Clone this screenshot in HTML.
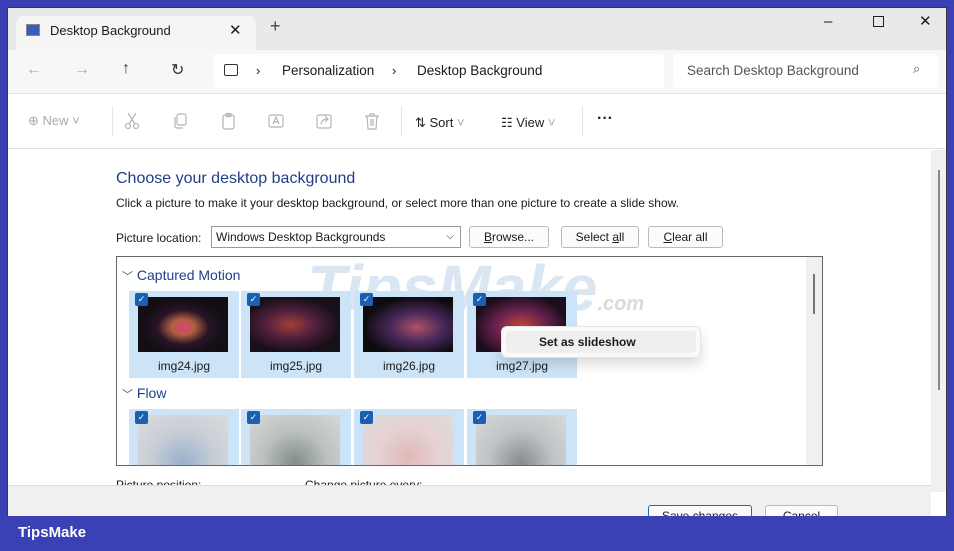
<!DOCTYPE html>
<html><head><meta charset="utf-8">
<style>
*{box-sizing:border-box;margin:0;padding:0}
body{width:954px;height:551px;background:#3a41b5;font-family:"Liberation Sans",sans-serif;position:relative;overflow:hidden;color:#1a1a1a}
.win{position:absolute;left:7px;top:7px;width:940px;height:515px;background:#fff;border:1px solid #3a3a3a;overflow:hidden}
.tabbar{position:absolute;left:0;top:0;width:100%;height:42px;background:#e9e9e9}
.tab{position:absolute;left:8px;top:8px;width:240px;height:34px;background:#f5f5f5;border-radius:8px 8px 0 0;font-size:13px}
.nav{position:absolute;left:0;top:42px;width:100%;height:44px;background:#f7f7f7;border-bottom:1px solid #e5e5e5}
.addr{position:absolute;left:206px;top:4px;width:450px;height:34px;background:#fff;border-radius:4px}
.search{position:absolute;left:665px;top:4px;width:265px;height:34px;background:#fff;border-radius:4px;font-size:13.5px;color:#555}
.tool{position:absolute;left:0;top:86px;width:100%;height:55px;background:#fff;border-bottom:1px solid #e2e2e2;font-size:13px;color:#222}
.t{position:absolute}
.gray{color:#aaa}
.ic{position:absolute;top:18px;width:18px;height:18px;fill:none;stroke:#b5b5b5;stroke-width:1.2}
.btn{position:absolute;height:22px;border:1px solid #bbb;border-radius:3px;background:#fbfbfb;font-size:12px;text-align:center;line-height:20px}
.item{position:absolute;width:110px;height:87px;background:#cce4f7}
.item .img{position:absolute;left:9px;top:6px;width:90px;height:55px}
.item .lbl{position:absolute;left:0;top:68px;width:100%;text-align:center;font-size:12px}
.chk{position:absolute;left:6px;top:2px;width:13px;height:13px;background:#1a5fb4;border-radius:2px;color:#fff;font-size:9px;line-height:13px;text-align:center;z-index:2}
</style></head><body>
<div class="win">
 <div class="tabbar">
  <div class="tab">
   <div class="t" style="left:10px;top:8px;width:14px;height:12px;background:#3b5bb8;border:1px solid #888"></div>
   <div class="t" style="left:34px;top:7px">Desktop Background</div>
   <div class="t" style="left:213px;top:5px;font-size:15px">✕</div>
  </div>
  <div class="t" style="left:262px;top:8px;font-size:18px;color:#444">+</div>
  <div class="t" style="left:816px;top:5px;font-size:15px">–</div>
  <div class="t" style="left:865px;top:8px;width:11px;height:11px;border:1.3px solid #222"></div>
  <div class="t" style="left:911px;top:4px;font-size:15px">✕</div>
 </div>
 <div class="nav">
  <div class="t gray" style="left:18px;top:11px;font-size:16px">←</div>
  <div class="t gray" style="left:66px;top:11px;font-size:16px">→</div>
  <div class="t" style="left:114px;top:10px;font-size:16px;color:#333">↑</div>
  <div class="t" style="left:163px;top:10px;font-size:16px;color:#333">↻</div>
  <div class="addr">
   <div class="t" style="left:10px;top:10px;width:14px;height:12px;border:1.3px solid #333;border-radius:2px"></div>
   <div class="t" style="left:42px;top:9px;font-size:13px">›</div>
   <div class="t" style="left:68px;top:9px;font-size:13.5px">Personalization</div>
   <div class="t" style="left:178px;top:9px;font-size:13px">›</div>
   <div class="t" style="left:203px;top:9px;font-size:13.5px">Desktop Background</div>
  </div>
  <div class="search"><div class="t" style="left:14px;top:9px">Search Desktop Background</div><div class="t" style="left:240px;top:7px;font-size:13px">⌕</div></div>
 </div>
 <div class="tool">
  <div class="t gray" style="left:20px;top:19px;font-size:13px">⊕ New ˅</div>
  <div class="t" style="left:104px;top:12px;width:1px;height:30px;background:#e5e5e5"></div>
  <svg class="ic" style="left:115px" viewBox="0 0 18 18"><circle cx="5" cy="14" r="2.5"/><circle cx="13" cy="14" r="2.5"/><path d="M6 12L13 1M12 12L5 1"/></svg>
  <svg class="ic" style="left:163px" viewBox="0 0 18 18"><rect x="6" y="2" width="9" height="11" rx="2"/><path d="M4 5v9a2 2 0 0 0 2 2h6"/></svg>
  <svg class="ic" style="left:211px" viewBox="0 0 18 18"><rect x="4" y="3" width="11" height="14" rx="2"/><rect x="7" y="1.5" width="5" height="3" rx="1"/></svg>
  <svg class="ic" style="left:259px" viewBox="0 0 18 18"><rect x="2" y="3" width="14" height="12" rx="2"/><path d="M6 12l3-7 3 7M7 10h4"/></svg>
  <svg class="ic" style="left:307px" viewBox="0 0 18 18"><rect x="2" y="3" width="14" height="13" rx="2"/><path d="M6 12c1-4 3-5 7-5M10 4l3 3-3 3"/></svg>
  <svg class="ic" style="left:355px" viewBox="0 0 18 18"><path d="M2 4h14M7 4V2h4v2M4 4l1 13h8l1-13M8 7v7M10 7v7"/></svg>
  <div class="t" style="left:393px;top:12px;width:1px;height:30px;background:#e5e5e5"></div>
  <div class="t" style="left:407px;top:21px">⇅ Sort <span class="gray">˅</span></div>
  <div class="t" style="left:493px;top:21px">☷ View <span class="gray">˅</span></div>
  <div class="t" style="left:574px;top:12px;width:1px;height:30px;background:#e5e5e5"></div>
  <div class="t" style="left:589px;top:16px;font-size:16px;font-weight:bold">···</div>
 </div>
 <div class="t" style="left:923px;top:142px;width:16px;height:342px;background:#f0f0f0"><div style="position:absolute;left:7px;top:20px;width:2px;height:220px;background:#888"></div></div>
 <div class="t" style="left:108px;top:162px;font-size:16px;color:#1f3f8a">Choose your desktop background</div>
 <div class="t" style="left:108px;top:188px;font-size:12px">Click a picture to make it your desktop background, or select more than one picture to create a slide show.</div>
 <div class="t" style="left:108px;top:223px;font-size:12px">Picture location:</div>
 <div class="t" style="left:203px;top:218px;width:250px;height:22px;border:1px solid #999;font-size:12px;line-height:20px;padding-left:4px">Windows Desktop Backgrounds<span style="position:absolute;right:6px;font-size:10px">⌵</span></div>
 <div class="btn" style="left:461px;top:218px;width:80px"><u>B</u>rowse...</div>
 <div class="btn" style="left:553px;top:218px;width:78px">Select <u>a</u>ll</div>
 <div class="btn" style="left:640px;top:218px;width:75px"><u>C</u>lear all</div>
 <div class="t" style="left:108px;top:248px;width:707px;height:210px;border:1px solid #666;overflow:hidden;background:#fff">
  <div class="t" style="right:0;top:0;width:16px;height:100%;background:#f0f0f0"><div style="position:absolute;left:7px;top:17px;width:2px;height:40px;background:#777"></div></div>
  <div class="t" style="left:5px;top:10px;font-size:14px;color:#1f3f8a"><span style="color:#555;font-size:11px">﹀</span> Captured Motion</div>
  <div class="t" style="left:190px;top:-6px;font-size:64px;font-weight:bold;font-style:italic;color:rgba(90,140,200,0.22)">TipsMake<span style="font-size:20px;color:rgba(150,150,150,0.35)">.com</span></div>
  <div class="item" style="left:12px;top:34px"><div class="chk">✓</div><div class="img" style="background:radial-gradient(ellipse at 50% 55%,#e0407a,#b06040 18%,#2a1428 40%,#120e14 65%)"></div><div class="lbl">img24.jpg</div></div>
  <div class="item" style="left:124px;top:34px"><div class="chk">✓</div><div class="img" style="background:radial-gradient(ellipse at 45% 50%,#a04038,#52203e 35%,#181018 70%)"></div><div class="lbl">img25.jpg</div></div>
  <div class="item" style="left:237px;top:34px"><div class="chk">✓</div><div class="img" style="background:radial-gradient(ellipse at 60% 55%,#b05068,#48285a 35%,#0e0b10 70%)"></div><div class="lbl">img26.jpg</div></div>
  <div class="item" style="left:350px;top:34px"><div class="chk">✓</div><div class="img" style="background:radial-gradient(ellipse at 50% 55%,#c84838,#6a2250 40%,#1a0e1a 75%)"></div><div class="lbl">img27.jpg</div></div>
  <div class="t" style="left:5px;top:128px;font-size:14px;color:#1f3f8a"><span style="color:#555;font-size:11px">﹀</span> Flow</div>
  <div class="item" style="left:12px;top:152px"><div class="chk">✓</div><div class="img" style="height:60px;background:radial-gradient(circle at 50% 80%,#9ab0cc,#c8ced6 50%,#dcdcdc)"></div></div>
  <div class="item" style="left:124px;top:152px"><div class="chk">✓</div><div class="img" style="height:60px;background:radial-gradient(circle at 50% 80%,#7f8c88,#bcc2c0 50%,#d8d8d8)"></div></div>
  <div class="item" style="left:237px;top:152px"><div class="chk">✓</div><div class="img" style="height:60px;background:radial-gradient(circle at 50% 70%,#e2b8b8,#e6d2d2 50%,#dcdcdc)"></div></div>
  <div class="item" style="left:350px;top:152px"><div class="chk">✓</div><div class="img" style="height:60px;background:radial-gradient(circle at 50% 80%,#858b90,#c0c4c6 50%,#d8d8d8)"></div></div>
 </div>
 <div class="t" style="left:493px;top:318px;width:200px;height:32px;background:#f9f9f9;border:1px solid #e4e4e4;border-radius:6px;box-shadow:0 6px 12px rgba(0,0,0,.15)"><div style="position:absolute;left:4px;top:4px;width:190px;height:22px;background:#efefef;border-radius:4px"></div><div style="position:absolute;left:37px;top:8px;font-size:12px;font-weight:bold">Set as slideshow</div></div>
 <div class="t" style="left:108px;top:470px;font-size:12px">Picture position:</div>
 <div class="t" style="left:297px;top:470px;font-size:12px">Change picture every:</div>
 <div class="t" style="left:0;top:477px;width:923px;height:40px;background:#f0f0f0;border-top:1px solid #ddd">
  <div class="btn" style="left:640px;top:19px;width:104px;border-color:#1a6fb0">Save changes</div>
  <div class="btn" style="left:757px;top:19px;width:73px">Cancel</div>
 </div>
</div>
<div class="t" style="left:0;top:516px;width:954px;height:35px;background:#3a41b5"></div>
<div class="t" style="left:18px;top:524px;color:#fff;font-weight:bold;font-size:15px">TipsMake</div>
</body></html>
